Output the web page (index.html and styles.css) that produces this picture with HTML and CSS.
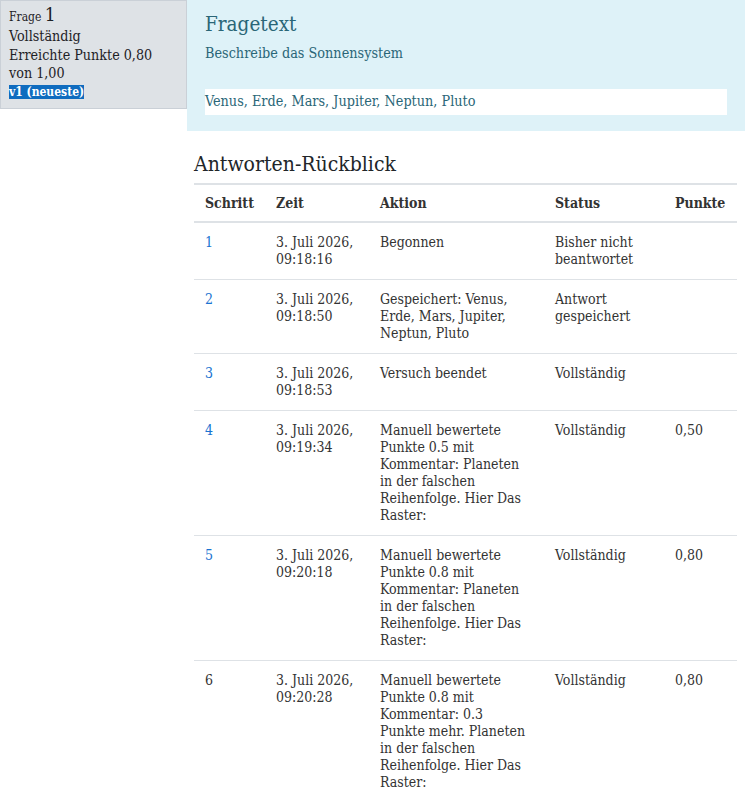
FILE: index.html
```html
<!DOCTYPE html>
<html lang="de">
<head>
    <meta charset="UTF-8">
    <title>Frage 1</title>
    <link rel="stylesheet" href="styles.css">
</head>
<body>
    <div class="que">
        <div class="info">
            <h3 class="no"><span class="qno-label">Frage</span> <span class="qno">1</span></h3>
            <div class="state">Vollständig</div>
            <div class="grade">Erreichte Punkte 0,80<br>von 1,00</div>
            <div class="version"><span>v1 (neueste)</span></div>
        </div>

        <div class="content">
            <div class="formulation">
                <h4 class="accesshide">Fragetext</h4>
                <div class="qtext">Beschreibe das Sonnensystem</div>
                <div class="answer">Venus, Erde, Mars, Jupiter, Neptun, Pluto</div>
            </div>

            <div class="history">
                <h3>Antworten-Rückblick</h3>
                <table class="generaltable">
                    <thead>
                        <tr>
                            <th class="c-step">Schritt</th>
                            <th class="c-time">Zeit</th>
                            <th class="c-action">Aktion</th>
                            <th class="c-state">Status</th>
                            <th class="c-mark">Punkte</th>
                        </tr>
                    </thead>
                    <tbody>
                        <tr>
                            <td><a href="#">1</a></td>
                            <td>3. Juli 2026,<br>09:18:16</td>
                            <td>Begonnen</td>
                            <td>Bisher nicht beantwortet</td>
                            <td></td>
                        </tr>
                        <tr>
                            <td><a href="#">2</a></td>
                            <td>3. Juli 2026,<br>09:18:50</td>
                            <td>Gespeichert: Venus, Erde, Mars, Jupiter, Neptun, Pluto</td>
                            <td>Antwort gespeichert</td>
                            <td></td>
                        </tr>
                        <tr>
                            <td><a href="#">3</a></td>
                            <td>3. Juli 2026,<br>09:18:53</td>
                            <td>Versuch beendet</td>
                            <td>Vollständig</td>
                            <td></td>
                        </tr>
                        <tr>
                            <td><a href="#">4</a></td>
                            <td>3. Juli 2026,<br>09:19:34</td>
                            <td>Manuell bewertete Punkte 0.5 mit Kommentar: Planeten in der falschen Reihenfolge. Hier Das Raster:</td>
                            <td>Vollständig</td>
                            <td>0,50</td>
                        </tr>
                        <tr>
                            <td><a href="#">5</a></td>
                            <td>3. Juli 2026,<br>09:20:18</td>
                            <td>Manuell bewertete Punkte 0.8 mit Kommentar: Planeten in der falschen Reihenfolge. Hier Das Raster:</td>
                            <td>Vollständig</td>
                            <td>0,80</td>
                        </tr>
                        <tr class="current">
                            <td>6</td>
                            <td>3. Juli 2026,<br>09:20:28</td>
                            <td>Manuell bewertete Punkte 0.8 mit Kommentar: 0.3 Punkte mehr. Planeten in der falschen Reihenfolge. Hier Das Raster:</td>
                            <td>Vollständig</td>
                            <td>0,80</td>
                        </tr>
                    </tbody>
                </table>
            </div>
        </div>
    </div>
</body>
</html>
```

FILE: styles.css
```css
* {
    box-sizing: border-box;
}
body {
    margin: 0;
    padding: 0;
    font-family: "DejaVu Serif Condensed", "DejaVu Serif", serif;
    font-stretch: condensed;
    font-size: 14px;
    line-height: 17px;
    color: #212529;
    background: #fff;
}
h3, h4 {
    margin: 0;
    font-weight: normal;
}
a {
    color: #1a73d1;
    text-decoration: none;
}

.que {
    display: flex;
    align-items: flex-start;
}

/* question info box */
.info {
    flex: 0 0 187px;
    padding: 7px 7px 7px 8px;
    background-color: #dee2e6;
    border: 1px solid #cad0d7;
    color: #1d2125;
    font-size: 14.2px;
    line-height: 18.5px;
}
.info .no {
    font-size: 12px;
    height: 19px;
    line-height: 19px;
}
.info .qno {
    font-size: 19px;
    line-height: 0;
}
.info .version {
    line-height: 17px;
}
.info .version span {
    background-color: #0f6cbf;
    color: #fff;
    font-weight: bold;
    font-size: 12px;
}

.content {
    flex: 1;
}

/* question text */
.formulation {
    background-color: #def2f8;
    color: #2a6677;
    font-size: 14.3px;
    padding: 11px 18px 16px 18px;
}
.formulation h4 {
    font-size: 20.5px;
    line-height: 26px;
}
.formulation .qtext {
    margin-top: 8px;
    margin-bottom: 27px;
}
.formulation .answer {
    background-color: #fff;
    padding: 3px 0 5px;
    line-height: 18px;
}

/* response history */
.history {
    padding: 20px 8px 0 7px;
}
.history h3 {
    font-size: 21px;
    line-height: 26px;
    margin-bottom: 6px;
}
.generaltable {
    width: 100%;
    border-collapse: collapse;
    table-layout: fixed;
    color: #333;
}
.generaltable th,
.generaltable td {
    text-align: left;
    vertical-align: top;
    padding: 11px;
    border-top: 1px solid #dee2e6;
}
.generaltable th {
    font-weight: bold;
    padding-top: 10px;
    padding-bottom: 9px;
    border-top-width: 2px;
    border-bottom: 2px solid #dee2e6;
}
.generaltable tbody tr:first-child td {
    border-top: 0;
}
.generaltable td:nth-child(3) {
    padding-right: 14px;
}
.c-step { width: 71px; }
.c-time { width: 104px; }
.c-action { width: 175px; }
.c-state { width: 120px; }
.c-mark { width: 73px; }
```
